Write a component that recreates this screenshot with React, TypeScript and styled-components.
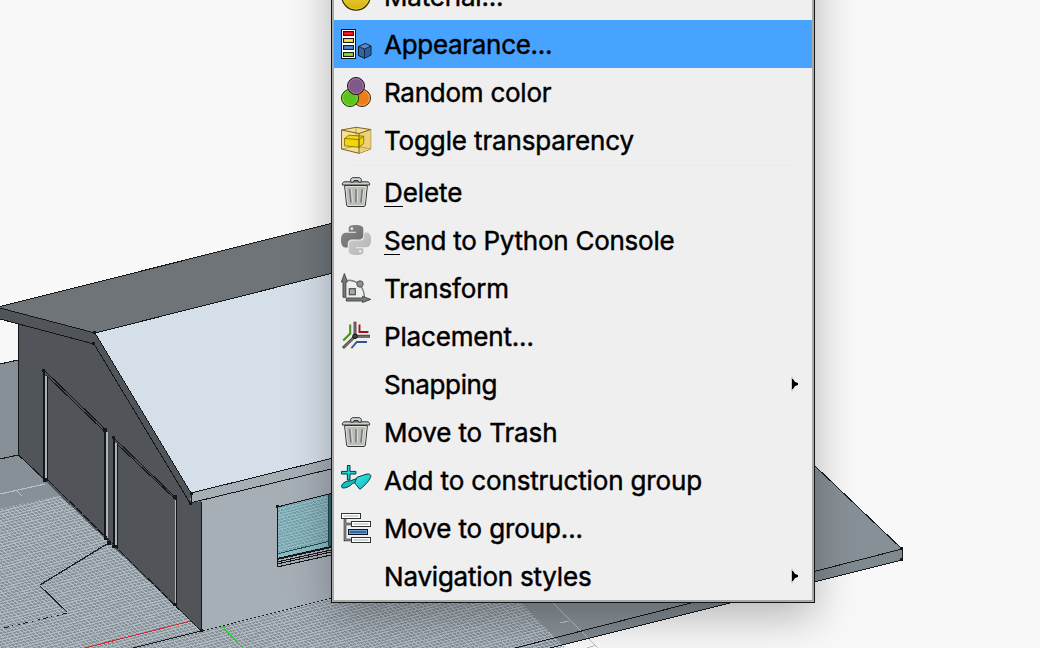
import React from "react";
import styled, { createGlobalStyle } from "styled-components";

const Global = createGlobalStyle`
  body { margin: 0; background: #f8f8f8; overflow: hidden; }
`;

const Viewport = styled.main`
  position: relative;
  width: 1040px;
  height: 648px;
  overflow: hidden;
  background: #f8f8f8;
`;

const Scene = styled.svg`
  display: block;
`;

const Menu = styled.div`
  position: absolute;
  left: 331px;
  top: -60px;
  box-sizing: border-box;
  width: 484px;
  height: 663px;
  border: 1px solid #141618;
  background: #efefef;
  box-shadow: inset 0 0 0 2px #a8a8a8, 0 14px 40px rgba(0, 0, 0, 0.27);
  padding: 0 2px 2px;
  display: flex;
  flex-direction: column;
  justify-content: flex-end;
`;

const Row = styled.div<{ $active?: boolean }>`
  display: flex;
  align-items: center;
  flex: none;
  height: 48px;
  padding: 0 14px 0 7px;
  background: ${(p) => (p.$active ? "#48a3ff" : "transparent")};
`;

const IconSlot = styled.span`
  flex: none;
  width: 30px;
  height: 30px;
  margin-right: 13px;
  svg { display: block; overflow: visible; }
`;

const Label = styled.span<{ $track: number }>`
  flex: 1;
  padding-top: 1px;
  font: 400 26px/40px Inter, "Liberation Sans", sans-serif;
  letter-spacing: ${(p) => p.$track}px;
  -webkit-text-stroke: 0.45px #000;
  color: #000;
  white-space: nowrap;
`;

const Mnemonic = styled.span`
  position: relative;
  &::after {
    content: "";
    position: absolute;
    left: 0;
    right: 0;
    bottom: 1px;
    height: 1px;
    background: #000;
  }
`;

const Separator = styled.div`
  flex: none;
  height: 1px;
  margin: 1px 20px 2px;
  background: #eaeaea;
`;

const Arrow = styled.svg`
  flex: none;
  display: block;
`;

const Svg = ({ children }: { children: React.ReactNode }) => (
  <svg width="30" height="30" viewBox="0 0 30 30">{children}</svg>
);

const MaterialIcon = () => (
  <Svg>
    <defs>
      <linearGradient id="gold" x1="0" y1="0" x2="0" y2="1">
        <stop offset="0" stopColor="#fce94f" />
        <stop offset="1" stopColor="#d4b010" />
      </linearGradient>
    </defs>
    <circle cx="15" cy="15" r="14.2" fill="url(#gold)" stroke="#302b00" strokeWidth="1.3" />
    <circle cx="15" cy="15" r="13" fill="none" stroke="#e6cb2c" strokeWidth="1" />
  </Svg>
);

const AppearanceIcon = () => (
  <Svg>
    <rect x="0.5" y="0.5" width="14" height="29" fill="#fff" stroke="#111" />
    {[["#ef2929", "#e01010"], ["#fce94f", "#edd400"], ["#5f8fc8", "#4a78b4"], ["#8ae234", "#73d216"]].map(([a, b], i) => (
      <g key={i}>
        <rect x="2.5" y={2.5 + i * 7} width="10" height="4" fill={b} stroke="#1b1b1b" />
        <rect x="4" y={4 + i * 7} width="7" height="1" fill={a} />
      </g>
    ))}
    <path d="M17.5 17.5 24.500 14.500 30 17V26L23.500 29.300 17.500 26.500Z" fill="#3465a4" stroke="#0b1521" strokeLinejoin="round" />
    <path d="M18 17.800 24.500 15 29.500 17.200 23.500 20Z" fill="#5c8ac4" />
    <path d="M24 20.500V28.500L29.500 25.700V17.800Z" fill="#2f5c9a" />
    <path d="M17.500 17.500 23.500 20 30 17M23.500 20V29" fill="none" stroke="#0b1521" strokeWidth="0.8" />
  </Svg>
);

const RandomIcon = () => (
  <Svg>
    <circle cx="21" cy="21" r="8.500" fill="#f57900" stroke="#222" />
    <circle cx="21" cy="21" r="7.400" fill="#ee7d18" stroke="#fcaf5e" strokeWidth="0.9" />
    <circle cx="9" cy="21" r="8.500" fill="#4fb512" stroke="#172a04" />
    <circle cx="9" cy="21" r="7.400" fill="#5cc41a" stroke="#8ae234" strokeWidth="0.9" />
    <circle cx="15" cy="9" r="8.500" fill="#75507b" stroke="#171018" />
    <circle cx="15" cy="9" r="7.400" fill="#80598a" stroke="#ad7fa8" strokeWidth="0.9" />
  </Svg>
);

const TransparencyIcon = () => (
  <Svg>
    <path d="M.5 5 15 2.300 29.700 4.500V24L18 28.300.5 24Z" fill="#f6df92" stroke="#6b5618" strokeWidth="0.9" strokeLinejoin="round" />
    <path d="M18 8.500 29.700 4.500V24L18 28.300Z" fill="#eed27a" />
    <path d="M15 2.300V21M.5 24 15 21 29.700 24" fill="none" stroke="#a18a40" strokeWidth="0.7" />
    <path d="M3.500 13.500 8 10.200 22.700 11.200V18.500L18 22.300 3.500 20.800Z" fill="#f0d60a" stroke="#7b6808" strokeWidth="0.8" />
    <path d="M3.500 13.500 18 14.600 22.700 11.200M18 14.600V22.300" fill="none" stroke="#7b6808" strokeWidth="0.8" />
    <path d="M.5 5 18 8.500 29.700 4.500M18 8.500V28.300" fill="none" stroke="#6b5618" strokeWidth="0.9" />
  </Svg>
);

const TrashIcon = () => (
  <Svg>
    <path d="M3.600 8.500H26.400L24.400 28 23.400 29.500H6.600L5.600 28Z" fill="#babdb6" stroke="#2e3436" strokeWidth="1" strokeLinejoin="round" />
    <path d="M4.800 9.500H25.200L23.300 27.800 22.900 28.500H7.100L6.700 27.800Z" fill="none" stroke="#e4e6e1" strokeWidth="0.8" />
    <path d="M8.700 12 10 25.500M15 12V25.500M21.300 12 20 25.500" stroke="#777a74" strokeWidth="1.600" />
    <path d="M10.300 12 11.500 25.500M16.400 12V25.500M22.800 12 21.500 25.500" stroke="#e2e4df" strokeWidth="0.8" />
    <path d="M3 4.800H27L28.600 6.200V8H1.400V6.200Z" fill="#cdd0c9" stroke="#2e3436" strokeWidth="1" strokeLinejoin="round" />
    <path d="M9.700 5.200V2.200L11.200.7H18.800L20.300 2.200V5.200H17.500L17 3.500H13L12.500 5.200Z" fill="#d3d7cf" stroke="#2e3436" strokeWidth="1" />
  </Svg>
);

const SNAKE =
  "M14.25.18l.9.2.73.26.59.3.45.32.34.34.25.34.16.33.1.3.04.26.02.2-.01.13V8.5l-.05.63-.13.55-.21.46-.26.38-.3.31-.33.25-.35.19-.35.14-.33.1-.3.07-.26.04-.21.02H8.77l-.69.05-.59.14-.5.22-.41.27-.33.32-.27.35-.2.36-.15.37-.1.35-.07.32-.04.27-.02.21v3.06H3.17l-.21-.03-.28-.07-.32-.12-.35-.18-.36-.26-.36-.36-.35-.46-.32-.59-.28-.73-.21-.88-.14-1.05-.05-1.23.06-1.22.16-1.04.24-.87.32-.71.36-.57.4-.44.42-.33.42-.24.4-.16.36-.1.32-.05.24-.01h.16l.06.01h8.16v-.83H6.18l-.01-2.75-.02-.37.05-.34.11-.31.17-.28.25-.26.31-.23.38-.2.44-.18.51-.15.58-.12.64-.1.71-.06.77-.04.84-.02 1.27.05zm-6.3 1.98l-.23.33-.08.41.08.41.23.34.33.22.41.09.41-.09.33-.22.23-.34.08-.41-.08-.41-.23-.33-.33-.22-.41-.09-.41.09z";

const PythonIcon = () => (
  <Svg>
    <defs>
      <linearGradient id="pyDark" x1="0" y1="0" x2="1" y2="1">
        <stop offset="0" stopColor="#8c8c8c" />
        <stop offset="1" stopColor="#686868" />
      </linearGradient>
      <linearGradient id="pyLight" x1="1" y1="1" x2="0" y2="0">
        <stop offset="0" stopColor="#cdcdcd" />
        <stop offset="1" stopColor="#b4b4b4" />
      </linearGradient>
    </defs>
    <path d={SNAKE} transform="scale(1.25)" fill="url(#pyDark)" />
    <path d={SNAKE} transform="translate(30 30) rotate(180) scale(1.25)" fill="url(#pyLight)" />
  </Svg>
);

const TransformIcon = () => (
  <Svg>
    <path d="M6.500 7.300C15 7 22.500 12 23.500 24" fill="none" stroke="#7b7e7b" strokeWidth="1.400" />
    <path d="M2 24.300V9H.4L3.400.5 6.500 9H4.900V24.300Z" fill="#777a77" stroke="#3f4344" strokeWidth="0.9" strokeLinejoin="round" />
    <path d="M5.300 25H21.500V23.300L29.800 26.400 21.500 29.500V28H5.300Z" fill="#777a77" stroke="#3f4344" strokeWidth="0.9" strokeLinejoin="round" />
    <rect x="8.300" y="15.700" width="6" height="6" fill="#a5a8a5" stroke="#4c504f" strokeWidth="1.200" />
    <circle cx="19" cy="11" r="3.200" fill="#8b8f8c" stroke="#555958" />
  </Svg>
);

const PlacementIcon = () => (
  <Svg>
    <g fill="none" strokeLinecap="square">
      <path d="M14 2.200V15.300H27.500M14 15.300 3 26" stroke="#49423f" strokeWidth="2.900" />
      <path d="M14 2.200V15.300H27.500M14 15.300 3 26" stroke="#8a7d79" strokeWidth="1.100" />
      <path d="M18.500 4.500V11H26.500" stroke="#a01414" strokeWidth="1.900" />
      <path d="M9.200 4.500V12.500L3 18.800" stroke="#4e8f1d" strokeWidth="2.100" />
      <path d="M11 26.500 15.800 21H25" stroke="#2c5590" strokeWidth="1.900" />
    </g>
    <circle cx="14" cy="15.300" r="2.300" fill="#444" stroke="#0d0d0d" />
  </Svg>
);

const TrowelIcon = () => (
  <Svg>
    <defs>
      <linearGradient id="teal" x1="0" y1="0" x2="1" y2="1">
        <stop offset="0" stopColor="#3ceaea" />
        <stop offset="1" stopColor="#10b4b8" />
      </linearGradient>
    </defs>
    <path d="M.6 21C1.500 17.500 6 15.600 9.500 15.800L15 13.800 17.500 16 11.500 18.600C9 21.500 4.500 23.300 1.800 23 .9 22.700.5 22 .6 21Z" fill="#12bfc4" stroke="#043b40" strokeWidth="1" strokeLinejoin="round" />
    <path d="M13.700 17.800 16 12.300 25 9.300C28 8.500 30.200 9.400 29.700 11.500 29 14.500 25 19.800 18.800 24.300Z" fill="url(#teal)" stroke="#043b40" strokeWidth="1" strokeLinejoin="round" />
    <path d="M6.400.5H9V6.400H14.900V9H9V14.900H6.400V9H.5V6.400H6.400Z" fill="#22cfd2" stroke="#043b40" strokeWidth="1" />
  </Svg>
);

const GroupIcon = () => (
  <Svg>
    <path d="M4 5V27H10M4 11H10" fill="none" stroke="#2e3436" strokeWidth="2.600" />
    <path d="M4 5V27H10M4 11H10" fill="none" stroke="#c9ccc5" strokeWidth="0.8" />
    {[[0, 0], [10, 8], [10, 24]].map(([x, y]) => (
      <g key={y}>
        <rect x={x + 0.5} y={y + 0.5} width="19" height="5" fill="#fff" stroke="#2e3436" />
        <rect x={x + 2.5} y={y + 2} width="15" height="2" fill="#d3d7cf" />
      </g>
    ))}
    <rect x="7.500" y="16.500" width="19" height="5" fill="#729fcf" stroke="#0b1521" />
    <rect x="9" y="18" width="16" height="2" fill="#3465a4" />
  </Svg>
);

type Item = {
  label: string;
  track: number;
  icon?: React.ReactNode;
  active?: boolean;
  mnemonic?: boolean;
  submenu?: boolean;
  divider?: boolean;
};

const items: Item[] = [
  { label: "Material...", track: -0.18, icon: <MaterialIcon /> },
  { label: "Appearance...", track: -0.3, icon: <AppearanceIcon />, active: true },
  { label: "Random color", track: -0.25, icon: <RandomIcon /> },
  { label: "Toggle transparency", track: -0.14, icon: <TransparencyIcon />, divider: true },
  { label: "Delete", track: -0.08, icon: <TrashIcon />, mnemonic: true },
  { label: "Send to Python Console", track: -0.26, icon: <PythonIcon />, mnemonic: true },
  { label: "Transform", track: -0.15, icon: <TransformIcon /> },
  { label: "Placement...", track: -0.17, icon: <PlacementIcon /> },
  { label: "Snapping", track: -0.36, submenu: true },
  { label: "Move to Trash", track: -0.13, icon: <TrashIcon /> },
  { label: "Add to construction group", track: -0.14, icon: <TrowelIcon /> },
  { label: "Move to group...", track: -0.13, icon: <GroupIcon /> },
  { label: "Navigation styles", track: -0.21, submenu: true },
];

// Two families of parallel lines make up the working-plane mesh.
const meshAcross = Array.from({ length: 160 }, (_, i) => `M0 ${500 + i * 2.93}L620 ${345 + i * 2.93}`).join("");
const meshDown = Array.from({ length: 240 }, (_, i) => `M${-260 + i * 4.62} 480l190 180`).join("");

const Building = () => (
  <Scene width="1040" height="648" viewBox="0 0 1040 648" shapeRendering="crispEdges">
    <defs>
      <clipPath id="mesh">
        <path d="M0 509 65 494 300 440 358 440 566 648H0Z" />
      </clipPath>
      <clipPath id="pane">
        <path d="M277 507 328 494V541L277 554Z" />
      </clipPath>
    </defs>
    <path d="M0 364 331 281 620 281 902 549V560L550 648H0Z" fill="#889097" />
    <path d="M815 571 902 549V560L815 581 550 648H515Z" fill="#7f8990" />
    <g clipPath="url(#mesh)" fill="none" stroke="#afbac2">
      <path d={meshAcross} />
      <path d={meshDown} strokeOpacity="0.85" />
    </g>
    <path d="M0 494 45 484M17 491l5 5M552 602 598 648M560 623l9-2M587 648l9-3" fill="none" stroke="#b8c3cb" />
    <path d="M0 364 18 360M0 459 18 455M815 466 902 549V560L550 648M902 549 515 648M133 648 201 631 331 598" fill="none" stroke="#17191b" />
    <path d="M85 648 191 621" stroke="#d32b2b" />
    <path d="M222 626 243 648" stroke="#25cf2b" />
    <path d="M107 544 40 585" stroke="#1c2228" strokeWidth="1.300" />
    <path d="M40 586 67 612" stroke="#1c2228" strokeWidth="1.200" />
    <path d="M67 613 4 628" stroke="#17191b" strokeDasharray="5 3 2 5 1 4" />
    <path d="M18 320 94 340 190 500H201V631L18 455Z" fill="#515459" />
    <path d="M0 306 331 223V273L95 333 95 335 0 310Z" fill="#6e7478" />
    <path d="M0 308 95 333 191 493 190 503 94 344 0 319Z" fill="#515459" />
    <path d="M95 333 331 273V458L191 493Z" fill="#d5dfe9" />
    <path d="M191 493 331 458V598L201 631V501L191 503Z" fill="#a6aeb6" />
    <g fill="none" stroke="#151719">
      <path d="M0 306.500 331 223.500M95 333 331 273.500M0 308 95 333 191 493 331 458.500M0 319 94 344 190 503 331 469" />
      <path d="M18.500 323V455L45 480M191.500 493V503M201.500 502V631" />
      <path d="M48 480 201 631" strokeDasharray="8 2" />
      <path d="M43 369 105 429M46 375 105 432M113 437 175 497M116 443 175 499" />
      <path d="M44 370V480M105 429V539M114 437V548M175.500 497V606" strokeWidth="2" />
      <path d="M47.500 376V481M117.500 443V548M107.500 432V540" />
    </g>
    <path d="M45 376h2V481h-2ZM106 432h1.500V538h-1.500ZM115 443h2V547h-2ZM175 500h1V603h-1Z" fill="#a9b4be" />
    <g fill="#151719">
      <path d="M93 331h3v3h-3ZM92 342h3v3h-3ZM42 369h3v3h-3ZM103 428h4v4h-4ZM112 436h3v3h-3ZM173 495h4v4h-4ZM190 492h3v3h-3ZM189 502h3v3h-3ZM43 478h4v4h-4ZM104 536h3v4h-3ZM107 541h4v4h-4ZM112 545h6v3h-6ZM173 603h4v3h-4ZM200 629h3v3h-3ZM900 547h3v3h-3ZM900 558h3v3h-3ZM276 505h3v3h-3Z" />
    </g>
    <path d="M277 507 331 493.500V546L277 558Z" fill="#77a0a8" />
    <g clipPath="url(#pane)" stroke="#92bdc5" fill="none">
      <path d={meshAcross} />
      <path d={meshDown} strokeOpacity="0.8" />
    </g>
    <path d="M277 554 328 542V546L277 558Z" fill="#8abcc5" />
    <path d="M328 494h3V546h-3Z" fill="#376570" />
    <path d="M277 554 328 541.500M328.500 494V546" fill="none" stroke="#214b54" />
    <path d="M277.500 567V507L331 493.500M277 562 331 550M277 564 331 552M277 567 331 555" fill="none" stroke="#151719" />
    <path d="M277 559 331 547" stroke="#151719" strokeWidth="2" />
  </Scene>
);

export default function App() {
  return (
    <Viewport>
      <Global />
      <Building />
      <Menu>
        {items.map((it) => (
          <React.Fragment key={it.label}>
            <Row $active={it.active}>
              <IconSlot>{it.icon}</IconSlot>
              <Label $track={it.track}>
                {it.mnemonic ? (
                  <>
                    <Mnemonic>{it.label[0]}</Mnemonic>
                    {it.label.slice(1)}
                  </>
                ) : (
                  it.label
                )}
              </Label>
              {it.submenu && (
                <Arrow width="8" height="14" viewBox="0 0 8 14">
                  <path d="M1 0h2v14H1Z" fill="#c8c8c8" />
                  <path d="M2 2h1L5 5 8 6v2L5 9 3 12H2Z" fill="#000" />
                </Arrow>
              )}
            </Row>
            {it.divider && <Separator />}
          </React.Fragment>
        ))}
      </Menu>
    </Viewport>
  );
}
